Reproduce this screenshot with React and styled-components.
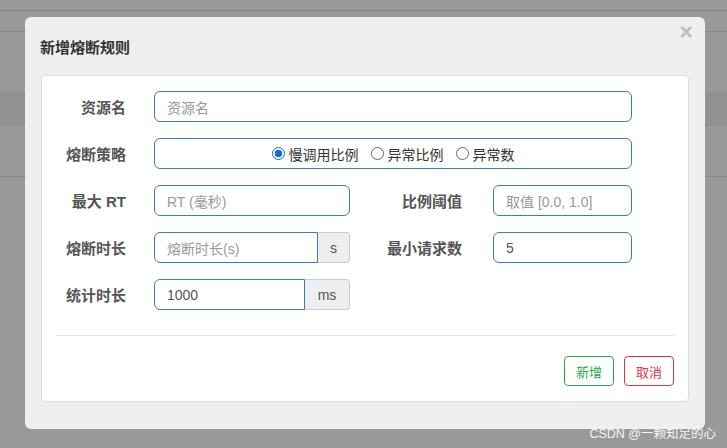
import React from 'react'
import styled, { createGlobalStyle } from 'styled-components'

const GlobalStyle = createGlobalStyle`
  body {
    margin: 0;
    font-family: "Liberation Sans", Arial, "Noto Sans CJK SC", sans-serif;
  }
`

const Page = styled.div`
  position: relative;
  width: 727px;
  height: 448px;
  overflow: hidden;
  background: #999;
  display: flex;
  flex-direction: column;
`

// the page under the modal mask
const Band = styled.div`
  height: ${p => p.h}px;
  background: ${p => p.bg || '#999'};
  border-bottom: ${p => (p.line ? '1px solid #888' : 'none')};
`

const Dialog = styled.div`
  position: absolute;
  left: 25px;
  top: 17px;
  width: 680px;
  height: 412px;
  background: #efefef;
  border-radius: 6px;
  box-sizing: border-box;
  display: flex;
  flex-direction: column;
`

const Header = styled.div`
  position: relative;
  height: 58px;
  padding: 0 15px;
  display: flex;
  align-items: center;
`

const Title = styled.h4`
  margin: 0;
  font-size: 15px;
  font-weight: bold;
  color: #333;
`

const Close = styled.span`
  position: absolute;
  right: 12px;
  top: 2px;
  font-size: 23px;
  font-weight: bold;
  color: #bdbdbd;
  cursor: pointer;
`

const Panel = styled.div`
  margin: 0 16px;
  background: #fff;
  border: 1px solid #ddd;
  border-radius: 4px;
  padding: 15px 14px;
  display: flex;
  flex-direction: column;
`

const Form = styled.div`
  display: flex;
  flex-direction: column;
  gap: 16px;
  padding-right: 42px;
`

const Row = styled.div`
  display: grid;
  grid-template-columns: 70px 196px 1fr 139px;
  column-gap: 28px;
  height: 31px;
  align-items: center;
`

const Label = styled.label`
  font-size: 15px;
  font-weight: bold;
  color: #555;
  text-align: right;
  padding-right: ${p => p.pr || 0}px;
  white-space: nowrap;
`

const Input = styled.div`
  grid-column: ${p => p.span || 'auto'};
  height: 31px;
  box-sizing: border-box;
  border: 1px solid #3a7cc0;
  border-radius: ${p => (p.addon ? '6px 0 0 6px' : '6px')};
  padding: 0 12px;
  display: flex;
  align-items: center;
  font-size: 14px;
  color: ${p => (p.filled ? '#555' : '#999')};
  flex: 1;
  justify-content: ${p => (p.center ? 'center' : 'flex-start')};
`

const Group = styled.div`
  display: flex;
  height: 31px;
`

const Addon = styled.div`
  width: ${p => p.w}px;
  box-sizing: border-box;
  background: #eee;
  border: 1px solid #ccc;
  border-left: none;
  border-radius: 0 4px 4px 0;
  display: flex;
  align-items: center;
  justify-content: center;
  font-size: 14px;
  color: #555;
`

const Radio = styled.span`
  display: inline-flex;
  align-items: center;
  margin: 0 6px;
  font-size: 14px;
  color: #333;
`

const Dot = styled.span`
  width: 13px;
  height: 13px;
  box-sizing: border-box;
  border-radius: 50%;
  margin-right: 4px;
  border: ${p => (p.on ? '1px solid #0b6fe0' : '1px solid #666')};
  background: ${p => (p.on ? 'radial-gradient(circle, #0b6fe0 0 3.5px, #fff 4px)' : '#fff')};
`

const Divider = styled.div`
  height: 1px;
  background: #e5e5e5;
  margin: 25px 0 20px;
`

const Footer = styled.div`
  display: flex;
  justify-content: flex-end;
  gap: 10px;
`

const Button = styled.button`
  width: 50px;
  height: 30px;
  background: #fff;
  border: 1px solid ${p => p.color};
  color: ${p => p.color};
  border-radius: 4px;
  font-size: 13px;
  font-family: inherit;
  padding: 0;
`

const Watermark = styled.span`
  position: absolute;
  right: 11px;
  bottom: 6px;
  font-size: 12.5px;
  color: #f4f4f4;
`

export default function App() {
  return (
    <>
      <GlobalStyle />
      <Page>
        <Band h={10} bg="#9a9a9a" line />
        <Band h={20} line />
        <Band h={60} />
        <Band h={34} bg="#909193" />
        <Band h={50} line />
        <Dialog>
          <Header>
            <Title>新增熔断规则</Title>
            <Close>×</Close>
          </Header>
          <Panel>
            <Form>
              <Row>
                <Label>资源名</Label>
                <Input span="2 / 5">资源名</Input>
              </Row>
              <Row>
                <Label>熔断策略</Label>
                <Input span="2 / 5" center filled>
                  <Radio><Dot on />慢调用比例</Radio>
                  <Radio><Dot />异常比例</Radio>
                  <Radio><Dot />异常数</Radio>
                </Input>
              </Row>
              <Row>
                <Label>最大 RT</Label>
                <Input>RT (毫秒)</Input>
                <Label pr={3}>比例阈值</Label>
                <Input>取值 [0.0, 1.0]</Input>
              </Row>
              <Row>
                <Label>熔断时长</Label>
                <Group>
                  <Input addon>熔断时长(s)</Input>
                  <Addon w={32}>s</Addon>
                </Group>
                <Label pr={3}>最小请求数</Label>
                <Input filled>5</Input>
              </Row>
              <Row>
                <Label>统计时长</Label>
                <Group>
                  <Input addon filled>1000</Input>
                  <Addon w={45}>ms</Addon>
                </Group>
              </Row>
            </Form>
            <Divider />
            <Footer>
              <Button color="#28a745">新增</Button>
              <Button color="#dc3545">取消</Button>
            </Footer>
          </Panel>
        </Dialog>
        <Watermark>CSDN @一颗知足的心</Watermark>
      </Page>
    </>
  )
}
